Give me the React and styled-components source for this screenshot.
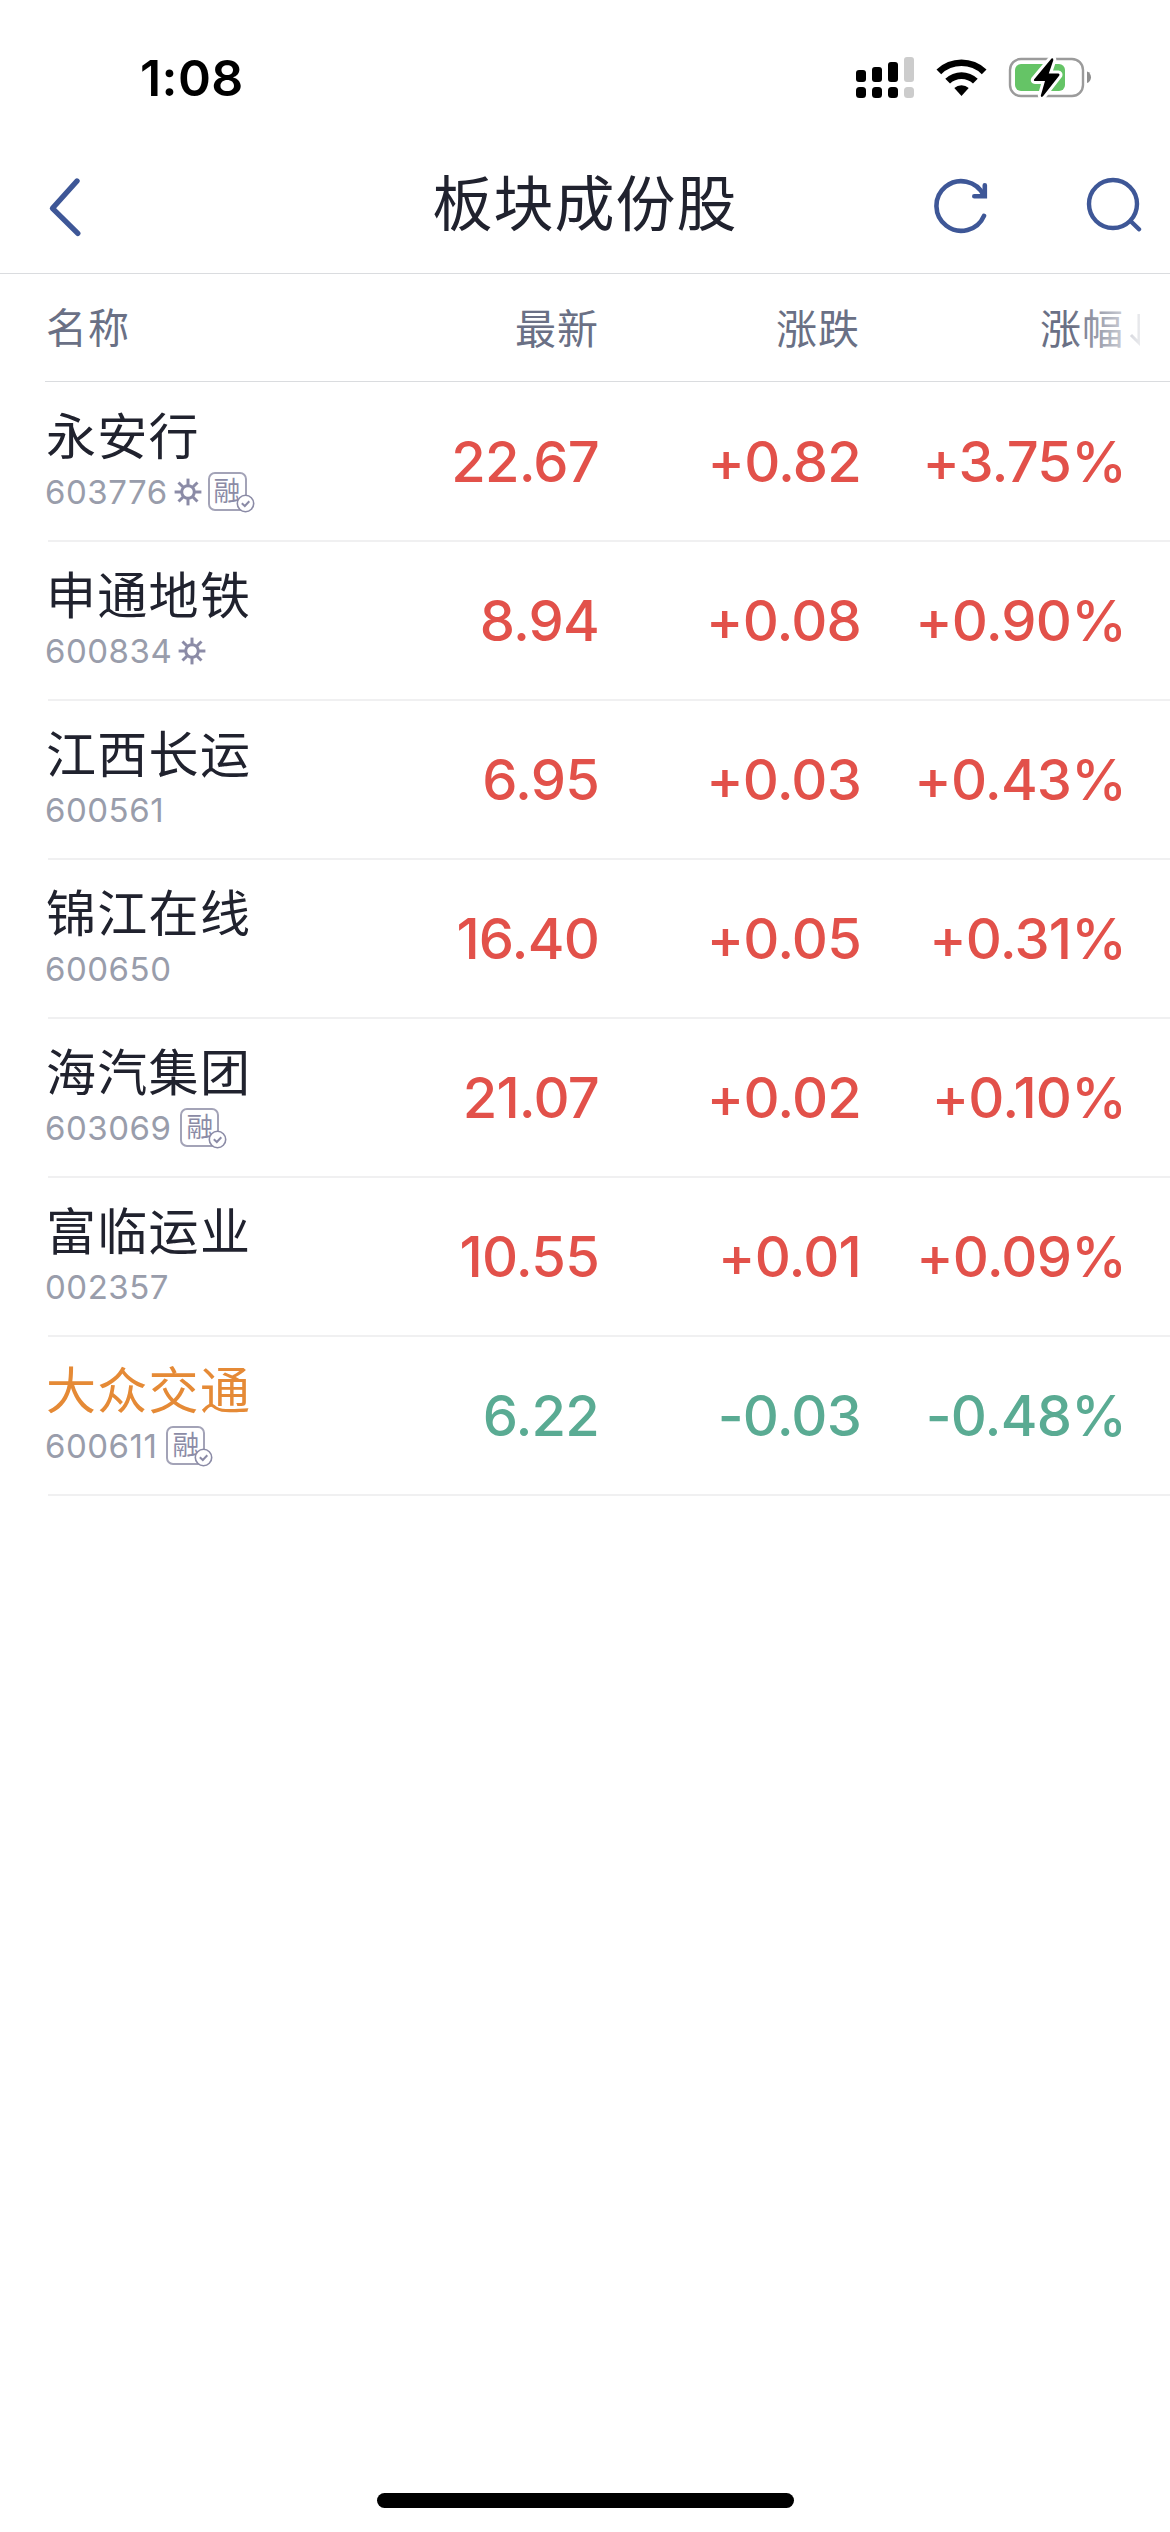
import React from "react";

import styled, { createGlobalStyle } from "styled-components";

const colors = {
  text: "#20222e",
  label: "#6a7085",
  code: "#999dab",
  badge: "#8b8ba6",
  up: "#e2514a",
  down: "#5aab93",
  held: "#e58a36",
  nav: "#3e5797"
};

const GlobalStyle = createGlobalStyle`
  body {
    margin: 0;
    background: #fff;
    font-family: Inter, "Noto Sans CJK SC", sans-serif;
  }

  * {
    box-sizing: border-box;
  }
`;

const Page = styled.div`
  display: flex;
  flex-direction: column;
  width: 1170px;
  height: 2532px;
  overflow: hidden;
  background: #fff;
`;

const StatusBar = styled.div`
  display: flex;
  justify-content: space-between;
  align-items: center;
  height: 142px;
  padding: 14px 78px 0 140px;
`;

const Time = styled.div`
  font-size: 50px;
  font-weight: 600;
  line-height: 60px;
  letter-spacing: 0.4px;
  color: #000;
`;

const StatusIcons = styled.div`
  display: flex;
  align-items: center;

  svg {
    display: block;
  }
`;

const NavBar = styled.div`
  display: grid;
  grid-template-columns: 300px 1fr 300px;
  align-items: center;
  height: 132px;
  padding-bottom: 6px;
  border-bottom: 1px solid #dadcdf;

  svg {
    display: block;
  }
`;

const BackButton = styled.div`
  padding: 5px 0 0 45px;
`;

const Title = styled.div`
  padding-bottom: 2px;
  font-size: 60px;
  line-height: 80px;
  letter-spacing: 1px;
  text-align: center;
  white-space: nowrap;
  color: ${colors.text};
`;

const NavActions = styled.div`
  display: flex;
  gap: 92px;
  padding: 1px 0 0 60px;
`;

const TableHead = styled.div`
  display: grid;
  grid-template-columns: 293px 260px 261px 1fr;
  align-items: center;
  height: 108px;
  margin: 0 0 1px 45px;
  padding-left: 1px;
  border-bottom: 1px solid #dadcdf;
`;

const HeadCell = styled.div`
  position: relative;
  font-size: 41px;
  line-height: 56px;
  letter-spacing: 1px;
  text-align: ${props => (props.$first ? "left" : "right")};
  padding-top: ${props => (props.$first ? 0 : 2)}px;
  color: ${colors.label};
`;

const SortCell = styled(HeadCell)`
  display: flex;
  justify-content: flex-end;
  margin-right: 30px;
`;

const SortArrow = styled.svg`
  width: 16px;
  height: 56px;
`;

const Fade = styled.div`
  position: absolute;
  top: 0;
  right: 0;
  width: 68px;
  height: 100%;
  background: linear-gradient(to right, rgba(255, 255, 255, 0), rgba(255, 255, 255, 0.86));
`;

const Row = styled.div`
  display: grid;
  grid-template-columns: 291px 260px 262px 265px;
  align-items: center;
  height: 159px;
  margin-left: 48px;
  border-bottom: 2px solid #f0f0f1;
`;

const StockInfo = styled.div`
  padding-bottom: 2px;
`;

const StockName = styled.div`
  font-size: 50px;
  line-height: 60px;
  letter-spacing: 1.3px;
  margin-left: -2px;
  white-space: nowrap;
  color: ${props => (props.$held ? colors.held : colors.text)};
`;

const StockMeta = styled.div`
  display: flex;
  align-items: center;
  height: 46px;
  margin: 2px 0 0 -3px;
`;

const Code = styled.span`
  font-size: 33px;
  line-height: 46px;
  letter-spacing: 0.5px;
  color: ${colors.code};
`;

const SunIcon = styled.svg`
  display: block;
  width: 28px;
  height: 28px;
  margin-left: 6px;
`;

const MarginBadge = styled.div`
  position: relative;
  width: 39px;
  height: 39px;
  margin-left: ${props => (props.$afterIcon ? 6 : 9)}px;
  border: 2px solid #a3a3b7;
  border-radius: 7px;
  font-size: 27px;
  line-height: 35px;
  text-align: center;
  color: ${colors.badge};

  svg {
    position: absolute;
    right: -10px;
    bottom: -4px;
  }
`;

const Value = styled.div`
  font-size: 56px;
  font-weight: 500;
  line-height: 70px;
  letter-spacing: -0.8px;
  text-align: right;
  white-space: nowrap;
  color: ${props => (props.$down ? colors.down : colors.up)};
`;

const HomeIndicator = styled.div`
  width: 417px;
  height: 15px;
  margin: auto auto 24px;
  border-radius: 8px;
  background: #000;
`;

const stocks = [
  { name: "永安行", code: "603776", sun: true, margin: true, price: "22.67", change: "+0.82", percent: "+3.75%" },
  { name: "申通地铁", code: "600834", sun: true, price: "8.94", change: "+0.08", percent: "+0.90%" },
  { name: "江西长运", code: "600561", price: "6.95", change: "+0.03", percent: "+0.43%" },
  { name: "锦江在线", code: "600650", price: "16.40", change: "+0.05", percent: "+0.31%" },
  { name: "海汽集团", code: "603069", margin: true, price: "21.07", change: "+0.02", percent: "+0.10%" },
  { name: "富临运业", code: "002357", price: "10.55", change: "+0.01", percent: "+0.09%" },
  { name: "大众交通", code: "600611", margin: true, held: true, down: true, price: "6.22", change: "-0.03", percent: "-0.48%" }
];

const Sun = () => (
  <SunIcon viewBox="-14 -14 28 28" fill="none" stroke={colors.badge} strokeWidth="3">
    <circle r="6.3" />
    {[0, 45, 90, 135, 180, 225, 270, 315].map(angle => (
      <path key={angle} d="M0 -7V-13.4" transform={`rotate(${angle})`} />
    ))}
  </SunIcon>
);

const Badge = ({ afterIcon }) => (
  <MarginBadge $afterIcon={afterIcon}>
    融
    <svg width="19" height="19" viewBox="0 0 19 19" fill="none" stroke={colors.badge}>
      <circle cx="9.5" cy="9.5" r="8.2" fill="#fff" strokeWidth="1.6" />
      <path d="M5.8 9.3L8.8 12L13.3 7.2" strokeWidth="2" />
    </svg>
  </MarginBadge>
);

const StockRow = ({ stock }) => (
  <Row>
    <StockInfo>
      <StockName $held={stock.held}>{stock.name}</StockName>
      <StockMeta>
        <Code>{stock.code}</Code>
        {stock.sun && <Sun />}
        {stock.margin && <Badge afterIcon={stock.sun} />}
      </StockMeta>
    </StockInfo>
    <Value $down={stock.down}>{stock.price}</Value>
    <Value $down={stock.down}>{stock.change}</Value>
    <Value $down={stock.down}>{stock.percent}</Value>
  </Row>
);

const App = () => {
  return (
    <Page>
      <GlobalStyle />
      <StatusBar>
        <Time>1:08</Time>
        <StatusIcons>
          <svg width="236" height="44" viewBox="856 56 236 44">
            <rect x="856" y="70" width="10" height="12" rx="3" />
            <rect x="872" y="67" width="10" height="15" rx="3" />
            <rect x="888" y="62" width="10" height="20" rx="3" />
            <rect x="904" y="57" width="10" height="25" rx="3" fill="#ccc" />
            <rect x="856" y="87" width="10" height="11" rx="3.5" />
            <rect x="872" y="87" width="10" height="11" rx="3.5" />
            <rect x="888" y="87" width="10" height="11" rx="3.5" />
            <rect x="904" y="87" width="10" height="11" rx="3.5" fill="#ccc" />

            <path d="M936.5 69.5A36 36 0 0 1 986.5 69.5L981.8 74.2A29 29 0 0 0 941.2 74.2Z" />
            <path d="M945.3 78.8A23.5 23.5 0 0 1 977.7 78.8L973 83.6A16.6 16.6 0 0 0 950 83.6Z" />
            <path d="M954.3 88A10.5 10.5 0 0 1 968.7 88L961.5 96Z" />

            <rect x="1010" y="59" width="73" height="37" rx="11" fill="none" stroke="#9b9b9b" strokeWidth="2.4" />
            <rect x="1015" y="64" width="50" height="27" rx="6" fill="#65c466" />
            <path d="M1087 71.5C1092.3 73 1092.3 81.5 1087 83Z" fill="#8e8e8e" />
            <path
              d="M1051.5 58.5L1034 79.5Q1033.3 81 1035 81H1045L1040.8 95.5Q1041 98 1043 96.3L1059.3 75.5Q1060 73.8 1058.3 73.6H1048.8L1053.3 60.2Q1053.5 57.5 1051.5 58.5Z"
              stroke="#fff"
              strokeWidth="6"
              strokeLinejoin="round"
              paintOrder="stroke"
            />
          </svg>
        </StatusIcons>
      </StatusBar>

      <NavBar>
        <BackButton>
          <svg width="40" height="64" viewBox="45 175 40 64" fill="none" stroke={colors.nav} strokeWidth="5.4" strokeLinecap="round" strokeLinejoin="round">
            <path d="M77 181L52.5 208.3L77.8 233.3" />
          </svg>
        </BackButton>
        <Title>板块成份股</Title>
        <NavActions>
          <svg width="60" height="60" viewBox="930 175 60 60" fill="none" stroke={colors.nav} strokeWidth="4.6" strokeLinecap="round">
            <path d="M984 215.8A24.8 24.8 0 1 1 983.5 195" />
            <path d="M984.8 185.3V196.3H974.3" />
          </svg>
          <svg width="60" height="60" viewBox="1082 175 60 60" fill="none" stroke={colors.nav} strokeWidth="4.4" strokeLinecap="round">
            <circle cx="1113" cy="204" r="24" />
            <path d="M1130.5 221L1139 229.3" />
          </svg>
        </NavActions>
      </NavBar>

      <TableHead>
        <HeadCell $first>名称</HeadCell>
        <HeadCell>最新</HeadCell>
        <HeadCell>涨跌</HeadCell>
        <SortCell>
          <span>涨幅</span>
          <SortArrow viewBox="0 0 16 56" fill="none" stroke={colors.label} strokeWidth="3">
            <path d="M15 13V42L7 34" />
          </SortArrow>
          <Fade />
        </SortCell>
      </TableHead>

      {stocks.map(stock => (
        <StockRow key={stock.code} stock={stock} />
      ))}

      <HomeIndicator />
    </Page>
  );
};

export default App;
